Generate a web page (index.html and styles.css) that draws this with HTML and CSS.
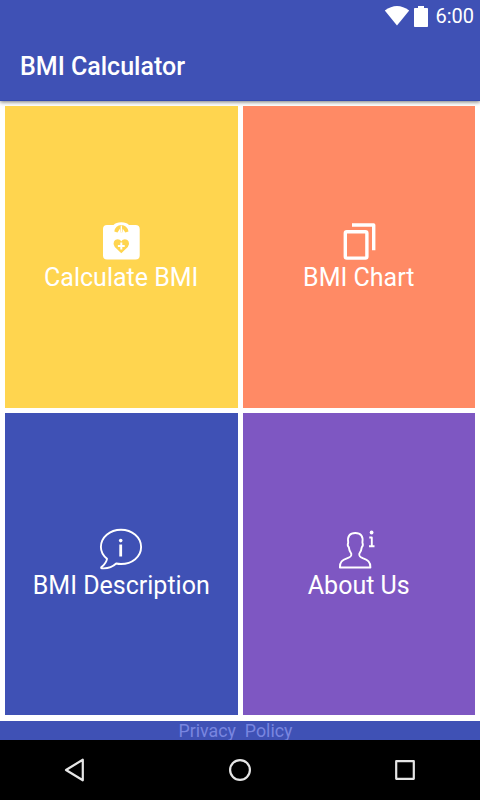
FILE: index.html
```html
<!DOCTYPE html>
<html>

<head>
    <meta charset="utf-8">
    <title>BMI Calculator</title>
    <link rel="stylesheet" href="styles.css">
</head>

<body>

    <header class="app-bar">
        <div class="status-bar">
            <svg class="wifi" width="26" height="20" viewBox="0 0 26 20">
                <path d="M0.8 4.6Q13 -4.6 25.2 4.6L13 19.4Z" />
            </svg>
            <svg class="battery" width="14" height="21" viewBox="0 0 14 21">
                <path d="M4 0h6v2h3.2q.8 0 .8.8v17.4q0 .8-.8.8H.8q-.8 0-.8-.8V2.8Q0 2 .8 2H4z" />
            </svg>
            <span class="clock">6:00</span>
        </div>
        <h1>BMI Calculator</h1>
    </header>

    <main class="menu">
        <a class="tile calculate">
            <svg class="icon" viewBox="0 0 42 42">
                <path class="solid" d="M7 3H13.500Q16 0.200 21.300 0.200T29 3H35.500Q39.700 3 39.700 7V33.500Q39.700 37.500 35.500 37.500H7Q3 37.500 3 33.500V7Q3 3 7 3Z" />
                <path class="cut" d="M14.300 9.500Q15.500 3 21.300 3T28.500 9.500L25.300 10.500L22.800 6.800L22.500 10.200H20.300L19.900 6.800L17.500 10.500Z" />
                <path class="solid" d="M20.800 3.500h1L22.300 10.200h-1.900Z" />
                <path class="cut" d="M21.300 31.300L14.800 25Q12.600 22.300 14 19.500C15.800 16.500 19.700 16.700 21.300 19.400C22.900 16.700 26.800 16.500 28.600 19.500Q30 22.300 27.800 25Z" />
                <path class="cross" d="M21.300 20.600v6.800M17.900 24h6.800" />
            </svg>
            <span>Calculate BMI</span>
        </a>
        <a class="tile chart">
            <svg class="icon" viewBox="0 0 42 42">
                <path class="thick" d="M14 3H35.700V28.200" />
                <rect class="thick" x="7.300" y="9.700" width="21.600" height="26.400" rx="1.500" />
            </svg>
            <span>BMI Chart</span>
        </a>
        <a class="tile description">
            <svg class="icon" viewBox="0 0 42 42">
                <path class="thin" d="M7 29.800C3 26.500 0.900 22.500 0.900 18C0.900 8.200 9.800 0.700 21 0.700S41.100 8.200 41.100 18S32.100 35 21 35Q18.500 35 16.200 34.500C12.500 38 7 39.700 2 39.300Q0.600 39 1.500 38C4.500 35.500 6.500 33 7 29.800Z" />
                <circle class="solid" cx="20.700" cy="11.600" r="1.800" />
                <path class="stem" d="M20.700 15.500v12" />
            </svg>
            <span>BMI Description</span>
        </a>
        <a class="tile about">
            <svg class="icon" viewBox="0 0 42 42">
                <path class="thin" d="M1.900 38.500C1.900 32.500 4 31.300 9.500 29.200C13 27.800 13.600 27 13.300 24.800C11.600 22.500 11 20.500 10.800 18.200C9.700 17.200 9.700 14.800 10.200 13.500C9.200 7 11.800 4 17.300 4S25.400 7 24.400 13.500C24.900 14.800 24.900 17.200 23.800 18.200C23.600 20.500 23 22.500 21.300 24.800C21 27 21.600 27.800 24.700 29.200C30 31.300 32.400 32.500 32.400 38.500Z" />
                <circle class="solid" cx="33.600" cy="3.500" r="1.900" />
                <path class="thin" d="M31.300 8.500h2.500v8.600M31 17.200h5.500" />
            </svg>
            <span>About Us</span>
        </a>
    </main>

    <footer class="privacy">Privacy&nbsp; Policy</footer>

    <nav class="nav-bar">
        <svg width="24" height="26" viewBox="0 0 24 26">
            <path d="M19.800 2.700V23.300L3 13Z" />
        </svg>
        <svg width="24" height="26" viewBox="0 0 24 26">
            <circle cx="12" cy="13" r="9.900" />
        </svg>
        <svg width="24" height="26" viewBox="0 0 24 26">
            <rect x="3.200" y="4.200" width="17.600" height="17.600" />
        </svg>
    </nav>

</body>

</html>
```

FILE: styles.css
```css
* {
    box-sizing: border-box;
}

body {
    display: flex;
    flex-direction: column;
    width: 480px;
    height: 800px;
    margin: 0;
    overflow: hidden;
    background: #fff;
    color: #fff;
    font-family: Roboto, sans-serif;
}

.app-bar {
    flex: none;
    height: 101px;
    background: #3f51b5;
    border-bottom: 1px solid #364aae;
    box-shadow: 0 1px 4px rgba(0, 0, 0, 0.55);
}

.status-bar {
    display: flex;
    justify-content: flex-end;
    align-items: center;
    height: 32px;
    padding-right: 6px;
    fill: #fff;
}

.battery {
    margin-left: 4px;
}

.clock {
    margin-left: 7px;
    padding-top: 1px;
    font-size: 20px;
    line-height: 31px;
}

h1 {
    margin: 0;
    padding-left: 20px;
    font-size: 25px;
    font-weight: 500;
    line-height: 70px;
}

/* menu tiles */
.menu {
    flex: 1;
    display: grid;
    grid-template-columns: 1fr 1fr;
    grid-template-rows: 1fr 1fr;
    gap: 5px;
    padding: 5px 5px 6px;
}

.tile {
    display: flex;
    flex-direction: column;
    align-items: center;
    justify-content: center;
    font-size: 25px;
    line-height: 29px;
}

.calculate,
.chart {
    line-height: 27px;
}

.calculate {
    background: #ffd54f;
}

.chart {
    background: #ff8a65;
}

.description {
    background: #3f51b5;
}

.about {
    background: #7e57c2;
}

/* icons */
.icon {
    width: 42px;
    height: 42px;
    fill: none;
    stroke-linejoin: round;
    overflow: visible;
}

.calculate .icon,
.chart .icon {
    margin-top: -1px;
}

.solid {
    fill: #fff;
}

.cut {
    fill: #ffd54f;
}

.cross {
    stroke: #fff;
    stroke-width: 2;
}

.thick {
    stroke: #fff;
    stroke-width: 3.4;
}

.thin {
    stroke: #fff;
    stroke-width: 1.9;
}

.stem {
    stroke: #fff;
    stroke-width: 2.8;
}

.privacy {
    flex: none;
    height: 19px;
    padding-right: 9px;
    background: #3f51b5;
    color: #7986e0;
    font-size: 17.8px;
    line-height: 20px;
    text-align: center;
}

.nav-bar {
    flex: none;
    display: flex;
    justify-content: space-between;
    align-items: center;
    height: 60px;
    padding: 0 63px;
    background: #000;
    fill: none;
    stroke: #e6e6e6;
    stroke-width: 2.2;
    stroke-linejoin: round;
}
```
